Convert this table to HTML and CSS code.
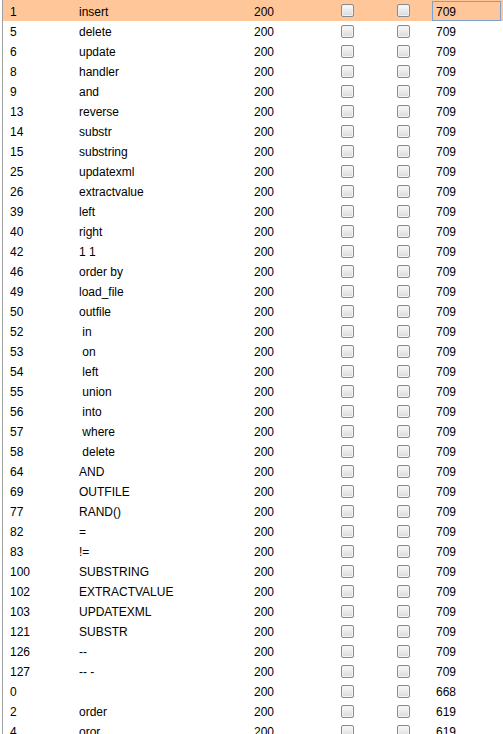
FILE: index.html
```html
<!DOCTYPE html>
<html>
<head>
<meta charset="utf-8">
<link rel="stylesheet" href="styles.css">
</head>
<body>
<div class="list">
  <div class="row selected"><span class="id">1</span><span class="name">insert</span><span class="code">200</span><span class="cb"></span><span class="cb"></span><span class="val focus">709</span></div>
  <div class="row"><span class="id">5</span><span class="name">delete</span><span class="code">200</span><span class="cb"></span><span class="cb"></span><span class="val">709</span></div>
  <div class="row"><span class="id">6</span><span class="name">update</span><span class="code">200</span><span class="cb"></span><span class="cb"></span><span class="val">709</span></div>
  <div class="row"><span class="id">8</span><span class="name">handler</span><span class="code">200</span><span class="cb"></span><span class="cb"></span><span class="val">709</span></div>
  <div class="row"><span class="id">9</span><span class="name">and</span><span class="code">200</span><span class="cb"></span><span class="cb"></span><span class="val">709</span></div>
  <div class="row"><span class="id">13</span><span class="name">reverse</span><span class="code">200</span><span class="cb"></span><span class="cb"></span><span class="val">709</span></div>
  <div class="row"><span class="id">14</span><span class="name">substr</span><span class="code">200</span><span class="cb"></span><span class="cb"></span><span class="val">709</span></div>
  <div class="row"><span class="id">15</span><span class="name">substring</span><span class="code">200</span><span class="cb"></span><span class="cb"></span><span class="val">709</span></div>
  <div class="row"><span class="id">25</span><span class="name">updatexml</span><span class="code">200</span><span class="cb"></span><span class="cb"></span><span class="val">709</span></div>
  <div class="row"><span class="id">26</span><span class="name">extractvalue</span><span class="code">200</span><span class="cb"></span><span class="cb"></span><span class="val">709</span></div>
  <div class="row"><span class="id">39</span><span class="name">left</span><span class="code">200</span><span class="cb"></span><span class="cb"></span><span class="val">709</span></div>
  <div class="row"><span class="id">40</span><span class="name">right</span><span class="code">200</span><span class="cb"></span><span class="cb"></span><span class="val">709</span></div>
  <div class="row"><span class="id">42</span><span class="name">1 1</span><span class="code">200</span><span class="cb"></span><span class="cb"></span><span class="val">709</span></div>
  <div class="row"><span class="id">46</span><span class="name">order by</span><span class="code">200</span><span class="cb"></span><span class="cb"></span><span class="val">709</span></div>
  <div class="row"><span class="id">49</span><span class="name">load_file</span><span class="code">200</span><span class="cb"></span><span class="cb"></span><span class="val">709</span></div>
  <div class="row"><span class="id">50</span><span class="name">outfile</span><span class="code">200</span><span class="cb"></span><span class="cb"></span><span class="val">709</span></div>
  <div class="row"><span class="id">52</span><span class="name"> in</span><span class="code">200</span><span class="cb"></span><span class="cb"></span><span class="val">709</span></div>
  <div class="row"><span class="id">53</span><span class="name"> on</span><span class="code">200</span><span class="cb"></span><span class="cb"></span><span class="val">709</span></div>
  <div class="row"><span class="id">54</span><span class="name"> left</span><span class="code">200</span><span class="cb"></span><span class="cb"></span><span class="val">709</span></div>
  <div class="row"><span class="id">55</span><span class="name"> union</span><span class="code">200</span><span class="cb"></span><span class="cb"></span><span class="val">709</span></div>
  <div class="row"><span class="id">56</span><span class="name"> into</span><span class="code">200</span><span class="cb"></span><span class="cb"></span><span class="val">709</span></div>
  <div class="row"><span class="id">57</span><span class="name"> where</span><span class="code">200</span><span class="cb"></span><span class="cb"></span><span class="val">709</span></div>
  <div class="row"><span class="id">58</span><span class="name"> delete</span><span class="code">200</span><span class="cb"></span><span class="cb"></span><span class="val">709</span></div>
  <div class="row"><span class="id">64</span><span class="name">AND</span><span class="code">200</span><span class="cb"></span><span class="cb"></span><span class="val">709</span></div>
  <div class="row"><span class="id">69</span><span class="name">OUTFILE</span><span class="code">200</span><span class="cb"></span><span class="cb"></span><span class="val">709</span></div>
  <div class="row"><span class="id">77</span><span class="name">RAND()</span><span class="code">200</span><span class="cb"></span><span class="cb"></span><span class="val">709</span></div>
  <div class="row"><span class="id">82</span><span class="name">=</span><span class="code">200</span><span class="cb"></span><span class="cb"></span><span class="val">709</span></div>
  <div class="row"><span class="id">83</span><span class="name">!=</span><span class="code">200</span><span class="cb"></span><span class="cb"></span><span class="val">709</span></div>
  <div class="row"><span class="id">100</span><span class="name">SUBSTRING</span><span class="code">200</span><span class="cb"></span><span class="cb"></span><span class="val">709</span></div>
  <div class="row"><span class="id">102</span><span class="name">EXTRACTVALUE</span><span class="code">200</span><span class="cb"></span><span class="cb"></span><span class="val">709</span></div>
  <div class="row"><span class="id">103</span><span class="name">UPDATEXML</span><span class="code">200</span><span class="cb"></span><span class="cb"></span><span class="val">709</span></div>
  <div class="row"><span class="id">121</span><span class="name">SUBSTR</span><span class="code">200</span><span class="cb"></span><span class="cb"></span><span class="val">709</span></div>
  <div class="row"><span class="id">126</span><span class="name">--</span><span class="code">200</span><span class="cb"></span><span class="cb"></span><span class="val">709</span></div>
  <div class="row"><span class="id">127</span><span class="name">-- -</span><span class="code">200</span><span class="cb"></span><span class="cb"></span><span class="val">709</span></div>
  <div class="row"><span class="id">0</span><span class="name"></span><span class="code">200</span><span class="cb"></span><span class="cb"></span><span class="val">668</span></div>
  <div class="row"><span class="id">2</span><span class="name">order</span><span class="code">200</span><span class="cb"></span><span class="cb"></span><span class="val">619</span></div>
  <div class="row"><span class="id">4</span><span class="name">oror</span><span class="code">200</span><span class="cb"></span><span class="cb"></span><span class="val">619</span></div>
</div>
</body>
</html>
```

FILE: styles.css
```css
html, body {
  margin: 0;
  padding: 0;
  background: #ffffff;
  overflow: hidden;
}

body {
  font-family: "Liberation Sans", Arial, sans-serif;
  font-size: 12px;
  color: #000000;
}

.list {
  margin-left: 2px;
  border-left: 1px solid #a0a0a0;
  padding-top: 1px;
}

.row {
  display: grid;
  grid-template-columns: 69px 175px 87px 56px 35px 69px;
  align-items: center;
  height: 20px;
  padding-left: 7px;
  line-height: 14px;
}

.row.selected {
  background: #ffc799;
  margin-top: -1px;
  height: 21px;
}

.id,
.name,
.code {
  padding-top: 2px;
}

.name {
  white-space: pre;
}

.cb {
  box-sizing: border-box;
  width: 13px;
  height: 13px;
  border: 1px solid #8a8a8a;
  border-radius: 2px;
  background: linear-gradient(#fafafa, #d8d9db);
  box-shadow: inset 0 0 0 1px #f2f2f2;
}

.val {
  box-sizing: border-box;
  height: 20px;
  line-height: 16px;
  padding-top: 2px;
  border: 1px solid transparent;
  padding-left: 3px;
}

.val.focus {
  border-color: #7aa1d0;
}
```
